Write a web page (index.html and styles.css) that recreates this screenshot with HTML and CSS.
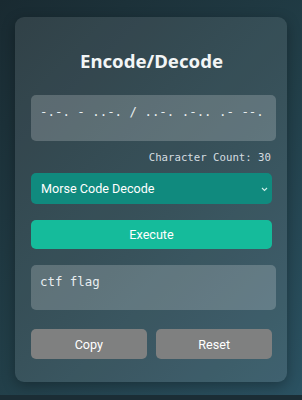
FILE: index.html
```html
<!DOCTYPE html>
<html>
  <head>
    <title>Encode/Decode</title>
    <link rel="stylesheet" href="styles.css">
  </head>
  <body>
    <div class="page">
      <div class="container">
        <h1>Encode/Decode</h1>
        <textarea id="input-text" class="text-box">-.-. - ..-. / ..-. .-.. .- --.</textarea>
        <div class="char-count">Character Count: 30</div>
        <div class="select-wrap">
          <select id="mode-select">
            <option>Morse Code Decode</option>
          </select>
          <svg class="chevron" width="7" height="5" viewBox="0 0 7 5"><path d="M1 1l2.5 2.5 2.5-2.5" fill="none" stroke="#cfeee9" stroke-width="1.1"/></svg>
        </div>
        <button class="execute-button">Execute</button>
        <textarea id="output-text" class="text-box output-box">ctf flag</textarea>
        <div class="button-container">
          <button class="gray-button">Copy</button>
          <button class="gray-button">Reset</button>
        </div>
      </div>
    </div>
  </body>
</html>
```

FILE: styles.css
```css
html {
  background-color: #1b2d35;
}
body {
  margin: 0;
  font-family: Roboto, Arial, sans-serif;
  color: #ffffff;
}
.page {
  height: 395px;
  padding: 17px 15px 0 15px;
  box-sizing: border-box;
  background: linear-gradient(135deg, #192a31 0%, #223f49 55%, #2b5262 100%);
}
.container {
  padding: 27px 15px 23px 16px;
  background-color: rgba(255,255,255,0.1);
  border-radius: 9px;
  box-shadow: 0px 4px 14px 0px rgba(0,0,0,0.3);
}
h1 {
  font-family: "Noto Sans", sans-serif;
  font-size: 18.6px;
  font-weight: 700;
  text-align: center;
  margin: 0 0 17px 0;
  line-height: 34px;
  color: #f2f5f6;
}
.text-box {
  display: block;
  width: calc(100% + 4px);
  height: 46px;
  box-sizing: border-box;
  margin: 0;
  padding: 9px 9px;
  border: none;
  border-radius: 5px;
  resize: none;
  background-color: rgba(255,255,255,0.2);
  color: #e8eef0;
  font-family: "DejaVu Sans Mono", monospace;
  font-size: 12.4px;
  line-height: 16px;
  outline: none;
}
.char-count {
  text-align: right;
  font-family: "DejaVu Sans Mono", monospace;
  font-size: 10.7px;
  color: #d5dde0;
  margin: 10px 1px 9px 0;
  line-height: 13px;
}
.select-wrap {
  position: relative;
}
select {
  display: block;
  width: 100%;
  height: 31px;
  appearance: none;
  border: none;
  border-radius: 5px;
  background-color: #108a7e;
  color: #ffffff;
  font-family: Roboto, sans-serif;
  font-size: 12.6px;
  padding: 0 10px;
}
.chevron {
  position: absolute;
  right: 4px;
  top: 14px;
}
button {
  display: block;
  border: none;
  border-radius: 5px;
  height: 29px;
  color: #ffffff;
  font-family: Roboto, sans-serif;
  font-size: 12.6px;
  cursor: pointer;
}
.execute-button {
  width: 100%;
  margin: 16px 0 16px 0;
  background-color: #15bb9b;
}
.output-box {
  height: 45px;
}
.button-container {
  display: flex;
  justify-content: space-between;
  margin-top: 19px;
}
.gray-button {
  width: 48%;
  height: 30px;
  background-color: #7f8080;
}
```
